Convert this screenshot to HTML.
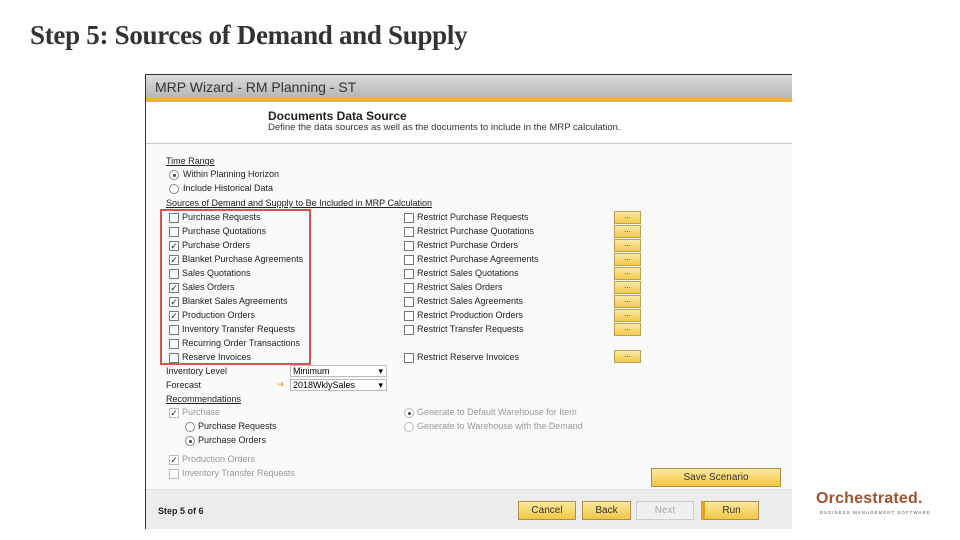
<!DOCTYPE html>
<html><head><meta charset="utf-8"><style>
*{margin:0;padding:0;box-sizing:border-box}
body{width:960px;height:540px;background:#fff;position:relative;overflow:hidden;font-family:"Liberation Sans",sans-serif}
.t{position:absolute;left:30px;top:20px;font-family:"Liberation Serif",serif;font-weight:bold;font-size:27px;color:#333;white-space:nowrap;letter-spacing:-0.3px}
.p{position:absolute;left:145px;top:74px;width:647px;height:455px;border:1px solid #333;border-right:none;background:#fafafa}
.tb{position:absolute;left:0;top:0;width:100%;height:23px;background:linear-gradient(#dcdcdc,#b5b5b5);font-size:14px;color:#333;padding:4px 0 0 9px}
.ol{position:absolute;left:0;top:23px;width:100%;height:4px;background:#f3b431}
.hd{position:absolute;left:0;top:27px;width:100%;height:42px;background:#fff;border-bottom:1px solid #ccc}
.hd b{position:absolute;left:122px;top:7px;font-size:12px;color:#222}
.hd span{position:absolute;left:122px;top:20px;font-size:9.5px;color:#333}
.f{position:absolute;font-size:9px;color:#222;white-space:nowrap}
.g{color:#999}
.u{text-decoration:underline}
.cb{position:absolute;width:10px;height:10px;border:1px solid #777;background:#fff;font-size:9px;line-height:8px;text-align:center;color:#222}
.rd{position:absolute;width:10px;height:10px;border:1px solid #888;border-radius:50%;background:#fff}
.rd.on::after{content:"";position:absolute;left:2.5px;top:2.5px;width:3px;height:3px;border-radius:50%;background:#444}
.el{position:absolute;left:468px;width:27px;height:13px;background:linear-gradient(#fbe9a8,#f2c94c);border:1px solid #b8a050;font-size:8px;text-align:center;line-height:8px;color:#444}
.btn{position:absolute;height:19px;background:linear-gradient(#fce9a0,#f2c645);border:1px solid #b09040;font-size:10px;text-align:center;line-height:17px;color:#333}
.dd{position:absolute;background:#fff;border:1px solid #bbb;height:12px;font-size:9px;line-height:10px;padding-left:2px}
.dd::after{content:"▾";position:absolute;right:3px;top:0;font-size:9px}
</style></head><body>
<div class="t">Step 5: Sources of Demand and Supply</div>
<div class="p">
<div class="tb">MRP Wizard - RM Planning - ST</div>
<div class="ol"></div>
<div class="hd"><b>Documents Data Source</b><span>Define the data sources as well as the documents to include in the MRP calculation.</span></div>
<div class="f u" style="left:20px;top:81px">Time Range</div>
<div class="rd on" style="left:23px;top:95px"></div><div class="f" style="left:37px;top:94px">Within Planning Horizon</div>
<div class="rd" style="left:23px;top:109px"></div><div class="f" style="left:37px;top:108px">Include Historical Data</div>
<div class="f u" style="left:20px;top:123px">Sources of Demand and Supply to Be Included in MRP Calculation</div>

<div class="cb" style="left:23px;top:138px"></div><div class="f" style="left:36px;top:137px">Purchase Requests</div>
<div class="cb" style="left:23px;top:152px"></div><div class="f" style="left:36px;top:151px">Purchase Quotations</div>
<div class="cb" style="left:23px;top:166px">✓</div><div class="f" style="left:36px;top:165px">Purchase Orders</div>
<div class="cb" style="left:23px;top:180px">✓</div><div class="f" style="left:36px;top:179px">Blanket Purchase Agreements</div>
<div class="cb" style="left:23px;top:194px"></div><div class="f" style="left:36px;top:193px">Sales Quotations</div>
<div class="cb" style="left:23px;top:208px">✓</div><div class="f" style="left:36px;top:207px">Sales Orders</div>
<div class="cb" style="left:23px;top:222px">✓</div><div class="f" style="left:36px;top:221px">Blanket Sales Agreements</div>
<div class="cb" style="left:23px;top:236px">✓</div><div class="f" style="left:36px;top:235px">Production Orders</div>
<div class="cb" style="left:23px;top:250px"></div><div class="f" style="left:36px;top:249px">Inventory Transfer Requests</div>
<div class="cb" style="left:23px;top:264px"></div><div class="f" style="left:36px;top:263px">Recurring Order Transactions</div>
<div class="cb" style="left:23px;top:278px"></div><div class="f" style="left:36px;top:277px">Reserve Invoices</div>
<div style="position:absolute;left:14px;top:134px;width:151px;height:156px;border:2px solid #d9534f"></div>

<div class="cb" style="left:258px;top:138px"></div><div class="f" style="left:271px;top:137px">Restrict Purchase Requests</div>
<div class="cb" style="left:258px;top:152px"></div><div class="f" style="left:271px;top:151px">Restrict Purchase Quotations</div>
<div class="cb" style="left:258px;top:166px"></div><div class="f" style="left:271px;top:165px">Restrict Purchase Orders</div>
<div class="cb" style="left:258px;top:180px"></div><div class="f" style="left:271px;top:179px">Restrict Purchase Agreements</div>
<div class="cb" style="left:258px;top:194px"></div><div class="f" style="left:271px;top:193px">Restrict Sales Quotations</div>
<div class="cb" style="left:258px;top:208px"></div><div class="f" style="left:271px;top:207px">Restrict Sales Orders</div>
<div class="cb" style="left:258px;top:222px"></div><div class="f" style="left:271px;top:221px">Restrict Sales Agreements</div>
<div class="cb" style="left:258px;top:236px"></div><div class="f" style="left:271px;top:235px">Restrict Production Orders</div>
<div class="cb" style="left:258px;top:250px"></div><div class="f" style="left:271px;top:249px">Restrict Transfer Requests</div>
<div class="cb" style="left:258px;top:278px"></div><div class="f" style="left:271px;top:277px">Restrict Reserve Invoices</div>

<div class="el" style="top:136px">...</div><div class="el" style="top:150px">...</div><div class="el" style="top:164px">...</div><div class="el" style="top:178px">...</div><div class="el" style="top:192px">...</div><div class="el" style="top:206px">...</div><div class="el" style="top:220px">...</div><div class="el" style="top:234px">...</div><div class="el" style="top:248px">...</div><div class="el" style="top:275px">...</div>

<div class="f" style="left:20px;top:291px">Inventory Level</div>
<div class="dd" style="left:144px;top:290px;width:97px">Minimum</div>
<div class="f" style="left:20px;top:305px">Forecast</div>
<div class="f" style="left:131px;top:304px;color:#f0b030">➜</div>
<div class="dd" style="left:144px;top:304px;width:97px">2018WklySales</div>
<div class="f u" style="left:20px;top:319px">Recommendations</div>
<div class="cb g" style="left:23px;top:333px;border-color:#bbb">✓</div><div class="f g" style="left:36px;top:332px">Purchase</div>
<div class="rd" style="left:39px;top:347px"></div><div class="f" style="left:52px;top:346px">Purchase Requests</div>
<div class="rd on" style="left:39px;top:361px"></div><div class="f" style="left:52px;top:360px">Purchase Orders</div>
<div class="cb g" style="left:23px;top:380px;border-color:#bbb">✓</div><div class="f g" style="left:36px;top:379px">Production Orders</div>
<div class="cb" style="left:23px;top:394px;border-color:#bbb"></div><div class="f g" style="left:36px;top:393px">Inventory Transfer Requests</div>
<div class="rd on" style="left:258px;top:333px;border-color:#bbb"></div><div class="f g" style="left:271px;top:332px">Generate to Default Warehouse for Item</div>
<div class="rd" style="left:258px;top:347px;border-color:#bbb"></div><div class="f g" style="left:271px;top:346px">Generate to Warehouse with the Demand</div>

<div class="btn" style="left:505px;top:393px;width:130px">Save Scenario</div>
<div style="position:absolute;left:0;top:414px;width:100%;height:40px;background:#ececec;border-top:1px solid #ddd"></div>
<div class="f" style="left:12px;top:431px;font-weight:bold">Step 5 of 6</div>
<div class="btn" style="left:372px;top:426px;width:58px">Cancel</div>
<div class="btn" style="left:436px;top:426px;width:49px">Back</div>
<div class="btn" style="left:490px;top:426px;width:58px;background:#f0f0f0;border-color:#ccc;color:#aaa">Next</div>
<div class="btn" style="left:555px;top:426px;width:58px;border-left:4px solid #e8a020">Run</div>
</div>
<div style="position:absolute;left:816px;top:490px;font-size:16px;font-weight:bold;color:#a0522d;letter-spacing:0.2px">Orchestrated.</div>
<div style="position:absolute;left:820px;top:510px;font-size:4.5px;color:#555;letter-spacing:1px">BUSINESS MANAGEMENT SOFTWARE</div>
</body></html>
